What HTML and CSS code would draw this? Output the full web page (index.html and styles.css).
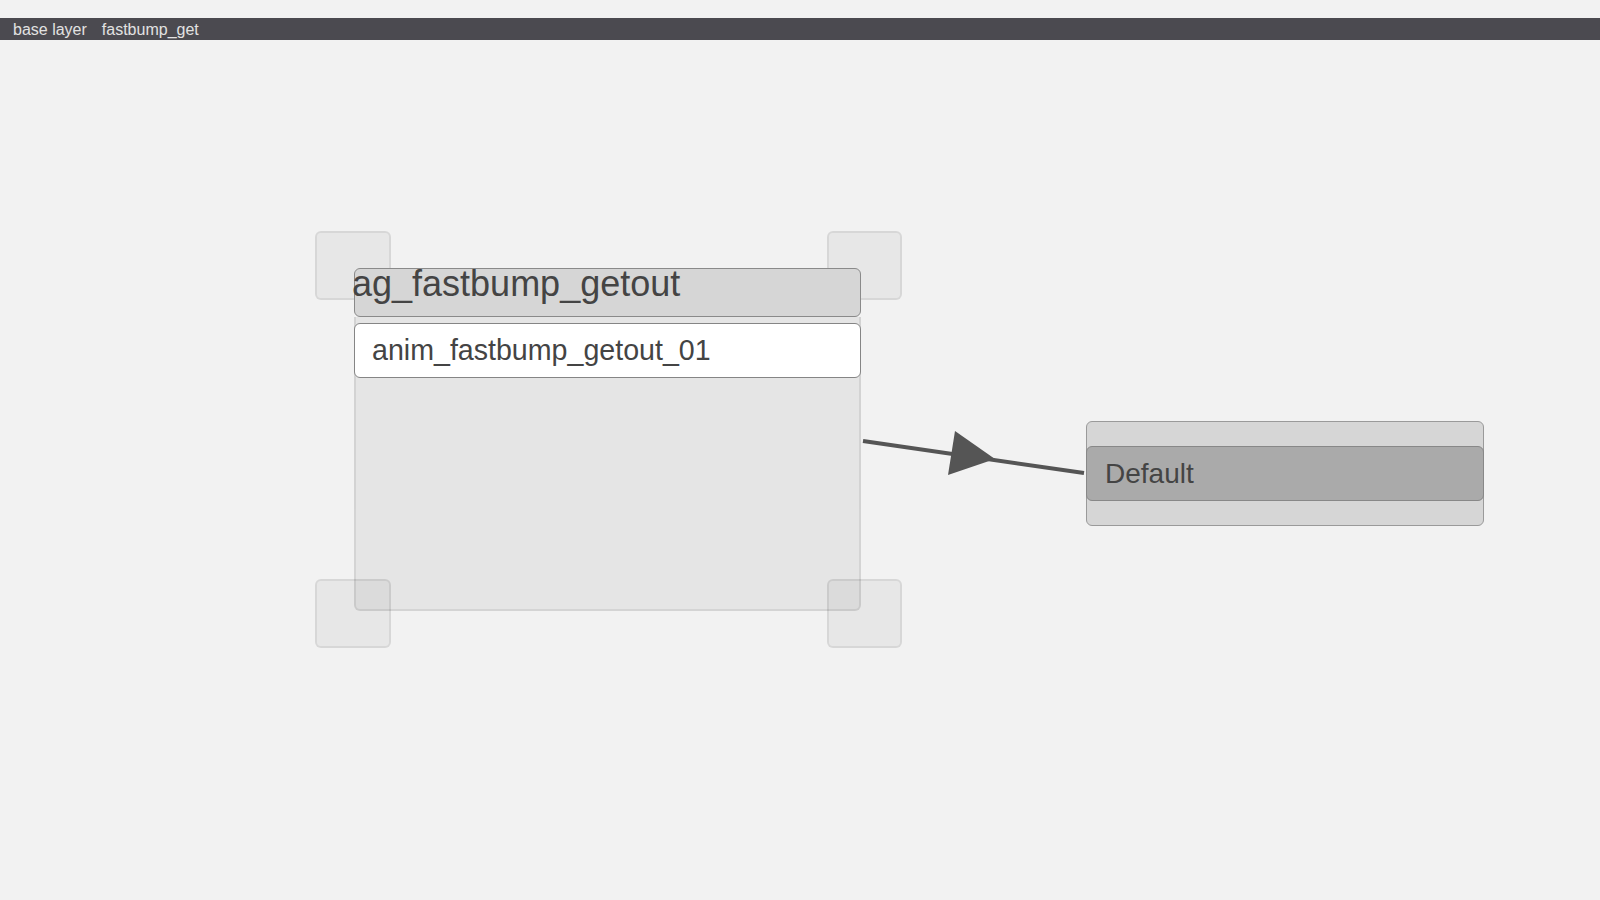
FILE: index.html
```html
<!DOCTYPE html>
<html lang="en">
<head>
    <meta charset="UTF-8">
    <title>fastbump_get</title>
    <link rel="stylesheet" href="styles.css">
</head>
<body>
    <div class="breadcrumb">
        <span class="breadcrumb__item">base layer</span>
        <span class="breadcrumb__item">fastbump_get</span>
    </div>

    <div class="graph">
        <svg class="graph__links" width="1600" height="860" viewBox="0 0 1600 860">
            <line x1="863" y1="401" x2="1084" y2="433" stroke="#555555" stroke-width="4"/>
            <polygon points="955,391 948,435 995,419" fill="#555555"/>
        </svg>

        <div class="handle handle--tl"></div>
        <div class="handle handle--tr"></div>
        <div class="handle handle--bl"></div>
        <div class="handle handle--br"></div>

        <div class="group-node">
            <div class="group-node__title">ag_fastbump_getout</div>
            <div class="group-node__body">
                <div class="anim-item">anim_fastbump_getout_01</div>
            </div>
        </div>

        <div class="state-node">
            <div class="state-node__label">Default</div>
        </div>
    </div>
</body>
</html>
```

FILE: styles.css
```css
* {
    margin: 0;
    padding: 0;
    box-sizing: border-box;
    font-family: "Liberation Sans", Arial, sans-serif;
}

body {
    background: #f2f2f2;
    width: 1600px;
    height: 900px;
    overflow: hidden;
}

.breadcrumb {
    margin-top: 18px;
    height: 22px;
    padding-left: 13px;
    padding-top: 1px;
    display: flex;
    align-items: center;
    gap: 15px;
    background: #4b4a50;
    color: #e2e2e2;
    font-size: 16px;
    line-height: 21px;
}

.graph {
    position: relative;
    height: 860px;
}

.graph__links {
    position: absolute;
    left: 0;
    top: 0;
    z-index: 3;
}

/* resize handles around the group */
.handle {
    position: absolute;
    width: 76px;
    height: 69px;
    border: 2px solid rgba(0, 0, 0, 0.07);
    border-radius: 6px;
    background: rgba(0, 0, 0, 0.045);
    z-index: 0;
}

.handle--tl { left: 315px; top: 191px; }
.handle--tr { left: 827px; top: 191px; width: 75px; }
.handle--bl { left: 315px; top: 539px; z-index: 2; }
.handle--br { left: 827px; top: 539px; width: 75px; z-index: 2; }

.group-node {
    position: absolute;
    left: 354px;
    top: 228px;
    width: 507px;
    height: 343px;
    display: flex;
    flex-direction: column;
    z-index: 1;
}

.group-node__title {
    height: 49px;
    background: #d6d6d6;
    border: 1px solid #8a8a8a;
    border-radius: 6px;
    color: #444444;
    font-size: 36px;
    line-height: 29px;
    text-indent: -3px;
    white-space: nowrap;
}

.group-node__body {
    flex: 1;
    background: rgba(0, 0, 0, 0.05);
    border: 2px solid rgba(0, 0, 0, 0.08);
    border-top: none;
    border-radius: 0 0 6px 6px;
    padding-top: 6px;
}

.anim-item {
    height: 55px;
    margin: 0 -2px;
    padding-left: 17px;
    background: #ffffff;
    border: 1px solid #858585;
    border-radius: 6px;
    color: #444444;
    font-size: 28.6px;
    line-height: 52px;
    white-space: nowrap;
}

.state-node {
    position: absolute;
    left: 1086px;
    top: 381px;
    width: 398px;
    height: 105px;
    padding-top: 24px;
    background: #d6d6d6;
    border: 1px solid #9a9a9a;
    border-radius: 6px;
}

.state-node__label {
    height: 55px;
    margin: 0 -1px;
    padding-left: 18px;
    background: #aaaaaa;
    border: 1px solid #888888;
    border-radius: 6px;
    color: #444444;
    font-size: 28px;
    line-height: 54px;
}
```
